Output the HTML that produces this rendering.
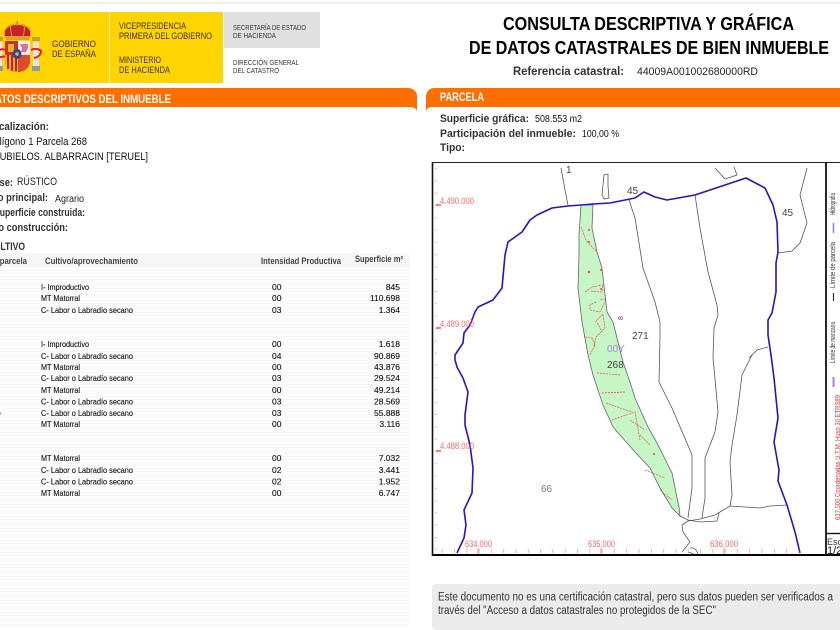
<!DOCTYPE html>
<html lang="es">
<head>
<meta charset="utf-8">
<title>Consulta descriptiva y gráfica</title>
<style>
html,body{margin:0;padding:0;width:840px;height:630px;overflow:hidden;background:#fff}
svg{display:block;position:absolute;left:0;top:0}
text{font-family:"Liberation Sans",sans-serif}
.b{font-weight:bold;fill:#333}
.r{font-size:8.5px;fill:#111;stroke:#111;stroke-width:.12}
.e{text-anchor:end}
.m{fill:#f66;font-size:9.5px}
.n{fill:#444;font-size:10px}
.lg{fill:#333;font-size:7.5px}
.blk{fill:none;stroke:#555;stroke-width:.8}
.red{fill:none;stroke:#e44;stroke-width:.7;stroke-dasharray:2 1}
</style>
</head>
<body>
<svg width="840" height="630" viewBox="0 0 840 630" xmlns="http://www.w3.org/2000/svg">
<defs>
<pattern id="st" width="4" height="3" patternUnits="userSpaceOnUse"><rect width="4" height="3" fill="#fcfcfc"/><rect width="4" height="1" fill="#f8f8f8"/></pattern>
</defs>
<rect x="0" y="2" width="840" height="2" fill="#eee"/>

<!-- Logo -->
<rect x="0" y="12" width="223" height="71" fill="#ffd400"/>
<rect x="109" y="12" width="1" height="71" fill="#f3e9a8"/>
<rect x="224" y="12" width="96" height="36" fill="#e0e0e0"/>
<!-- Coat of arms -->
<path d="M5 37C3 29 9 25 17.500 25C26 25 32 29 30 37Z" fill="#c8202a"/>
<path d="M5 36h25l-1 4H6Z" fill="#e0a020"/>
<rect x="16.500" y="21" width="1.500" height="5" fill="#b58a20"/>
<path d="M4 32C6 26 12 24 17.500 24C23 24 29 26 31 32M11 25C10 29 11 33 12 36M24 25C25 29 24 33 23 36" fill="none" stroke="#c9a030" stroke-width="1"/>
<path d="M5 41h25v20c0 6-6 11-12.500 11S5 67 5 61Z" fill="#d8352a"/>
<rect x="18" y="41" width="12" height="14" fill="#eee"/>
<path d="M20 44h8v4l-2 4h-5l1-4Z" fill="#d870a0"/>
<rect x="5" y="41" width="13" height="14" fill="#c8302a"/>
<rect x="8" y="44" width="6" height="8" fill="#e8b030"/>
<path d="M5 55h13v17C10 71 5 67 5 61Z" fill="#e8b030"/>
<path d="M8 55v14M12 55v16M16 55v16" stroke="#c8202a" stroke-width="2"/>
<path d="M18 55h12v6c0 6-5 11-12 11Z" fill="#dd4b2a"/>
<ellipse cx="17" cy="54" rx="4.500" ry="5" fill="#2a4a9a"/>
<circle cx="17" cy="54" r="1.800" fill="#e8b030"/>
<rect x="33" y="42" width="6" height="26" fill="#e6e6e6"/>
<rect x="32" y="37" width="8" height="4" fill="#c9a030"/>
<rect x="32" y="66" width="8" height="5" fill="#8a9aaa"/>
<rect x="0" y="42" width="2" height="26" fill="#e6e6e6"/>
<rect x="0" y="37" width="3" height="4" fill="#c9a030"/>
<rect x="0" y="66" width="3" height="5" fill="#8a9aaa"/>
<path d="M31 50c4-2 8-1 10 1c0 3-2 6-7 7" fill="none" stroke="#d8202a" stroke-width="2"/>
<path d="M5 50c-1-1-3-1-6 0M5 56c-1 1-3 1-6 1" fill="none" stroke="#d8202a" stroke-width="2"/>

<g font-size="9.500" fill="#3a3200">
<text x="52" y="47" textLength="44" lengthAdjust="spacingAndGlyphs">GOBIERNO</text>
<text x="52" y="57" textLength="44" lengthAdjust="spacingAndGlyphs">DE ESPAÑA</text>
<text x="119" y="29" textLength="67" lengthAdjust="spacingAndGlyphs">VICEPRESIDENCIA</text>
<text x="119" y="39" textLength="93" lengthAdjust="spacingAndGlyphs">PRIMERA DEL GOBIERNO</text>
<text x="119" y="63" textLength="42" lengthAdjust="spacingAndGlyphs">MINISTERIO</text>
<text x="119" y="73" textLength="51" lengthAdjust="spacingAndGlyphs">DE HACIENDA</text>
</g>
<g font-size="7.500" fill="#333">
<text x="233" y="30" textLength="73" lengthAdjust="spacingAndGlyphs">SECRETARÍA DE ESTADO</text>
<text x="233" y="38" textLength="43" lengthAdjust="spacingAndGlyphs">DE HACIENDA</text>
<text x="233" y="65" textLength="66" lengthAdjust="spacingAndGlyphs">DIRECCIÓN GENERAL</text>
<text x="233" y="73" textLength="46" lengthAdjust="spacingAndGlyphs">DEL CATASTRO</text>
</g>

<!-- Title -->
<g font-weight="bold" font-size="18.500px" fill="#000">
<text x="503" y="30" textLength="291" lengthAdjust="spacingAndGlyphs">CONSULTA DESCRIPTIVA Y GRÁFICA</text>
<text x="469" y="54" textLength="360" lengthAdjust="spacingAndGlyphs">DE DATOS CATASTRALES DE BIEN INMUEBLE</text>
</g>
<text class="b" x="513" y="75" font-size="11.500" textLength="111" lengthAdjust="spacingAndGlyphs">Referencia catastral:</text>
<text x="637" y="75" font-size="11" fill="#222" textLength="121" lengthAdjust="spacingAndGlyphs">44009A001002680000RD</text>

<!-- Orange bars -->
<path d="M-5 88H408C413 88 416 91 417 95V111C416 108 413 107 410 107H-5Z" fill="#ff6f00"/>
<path d="M426 111V95C427 91 430 88 434 88H840V107H432C429 107 427 108 426 111Z" fill="#ff6f00"/>
<text x="-12" y="103" font-size="12" font-weight="bold" fill="#fff" textLength="183" lengthAdjust="spacingAndGlyphs">DATOS DESCRIPTIVOS DEL INMUEBLE</text>
<text x="440" y="101" font-size="11.500" font-weight="bold" fill="#fff" textLength="44" lengthAdjust="spacingAndGlyphs">PARCELA</text>

<!-- Left details -->
<g font-size="11">
<text class="b" x="-13" y="130" textLength="62" lengthAdjust="spacingAndGlyphs">Localización:</text>
<text x="-12" y="145" fill="#111" textLength="99" lengthAdjust="spacingAndGlyphs">Polígono 1 Parcela 268</text>
<text x="-7" y="160" fill="#111" textLength="155" lengthAdjust="spacingAndGlyphs">CUBIELOS. ALBARRACIN [TERUEL]</text>
<text class="b" x="-15" y="186" textLength="28" lengthAdjust="spacingAndGlyphs">Clase:</text>
<text x="17" y="185" fill="#222" textLength="40" lengthAdjust="spacingAndGlyphs">RÚSTICO</text>
<text class="b" x="-14" y="201" textLength="62" lengthAdjust="spacingAndGlyphs">Uso principal:</text>
<text x="55" y="202" font-size="10" fill="#222" textLength="29" lengthAdjust="spacingAndGlyphs">Agrario</text>
<text class="b" x="-6" y="216" textLength="91" lengthAdjust="spacingAndGlyphs">Superficie construida:</text>
<text class="b" x="-14" y="231" textLength="82" lengthAdjust="spacingAndGlyphs">Año construcción:</text>
<text class="b" x="-12" y="250" textLength="37" lengthAdjust="spacingAndGlyphs">CULTIVO</text>
</g>

<!-- Table -->
<rect x="-10" y="253" width="420" height="374" rx="6" fill="url(#st)"/>
<path d="M-10 253H404a6 6 0 0 1 6 6V267H-10Z" fill="#f6f6f6"/>
<g font-size="9" class="b" style="fill:#444">
<text x="-15" y="264" textLength="42" lengthAdjust="spacingAndGlyphs">Subparcela</text>
<text x="45" y="264" textLength="93" lengthAdjust="spacingAndGlyphs">Cultivo/aprovechamiento</text>
<text x="261" y="264" textLength="80" lengthAdjust="spacingAndGlyphs">Intensidad Productiva</text>
<text x="355" y="262" textLength="48" lengthAdjust="spacingAndGlyphs">Superficie m²</text>
</g>
<g>
<text class="r" x="41" y="290" textLength="48" lengthAdjust="spacingAndGlyphs">I- Improductivo</text><text class="r" x="272" y="290">00</text><text class="r e" x="400" y="290">845</text>
<text class="r" x="41" y="301" textLength="39" lengthAdjust="spacingAndGlyphs">MT Matorral</text><text class="r" x="272" y="301">00</text><text class="r e" x="400" y="301">110.698</text>
<text class="r" x="41" y="313" textLength="92" lengthAdjust="spacingAndGlyphs">C- Labor o Labradío secano</text><text class="r" x="272" y="313">03</text><text class="r e" x="400" y="313">1.364</text>

<text class="r" x="41" y="347" textLength="48" lengthAdjust="spacingAndGlyphs">I- Improductivo</text><text class="r" x="272" y="347">00</text><text class="r e" x="400" y="347">1.618</text>
<text class="r" x="41" y="359" textLength="92" lengthAdjust="spacingAndGlyphs">C- Labor o Labradío secano</text><text class="r" x="272" y="359">04</text><text class="r e" x="400" y="359">90.869</text>
<text class="r" x="41" y="370" textLength="39" lengthAdjust="spacingAndGlyphs">MT Matorral</text><text class="r" x="272" y="370">00</text><text class="r e" x="400" y="370">43.876</text>
<text class="r" x="41" y="381" textLength="92" lengthAdjust="spacingAndGlyphs">C- Labor o Labradío secano</text><text class="r" x="272" y="381">03</text><text class="r e" x="400" y="381">29.524</text>
<text class="r" x="41" y="393" textLength="39" lengthAdjust="spacingAndGlyphs">MT Matorral</text><text class="r" x="272" y="393">00</text><text class="r e" x="400" y="393">49.214</text>
<text class="r" x="41" y="404.500" textLength="92" lengthAdjust="spacingAndGlyphs">C- Labor o Labradío secano</text><text class="r" x="272" y="404.500">03</text><text class="r e" x="400" y="404.500">28.569</text>
<text class="r" x="41" y="416" textLength="92" lengthAdjust="spacingAndGlyphs">C- Labor o Labradío secano</text><text class="r" x="272" y="416">03</text><text class="r e" x="400" y="416">55.888</text>
<text class="r" x="41" y="427" textLength="39" lengthAdjust="spacingAndGlyphs">MT Matorral</text><text class="r" x="272" y="427">00</text><text class="r e" x="400" y="427">3.116</text>

<text class="r" x="41" y="461" textLength="39" lengthAdjust="spacingAndGlyphs">MT Matorral</text><text class="r" x="272" y="461">00</text><text class="r e" x="400" y="461">7.032</text>
<text class="r" x="41" y="473" textLength="92" lengthAdjust="spacingAndGlyphs">C- Labor o Labradío secano</text><text class="r" x="272" y="473">02</text><text class="r e" x="400" y="473">3.441</text>
<text class="r" x="41" y="484.500" textLength="92" lengthAdjust="spacingAndGlyphs">C- Labor o Labradío secano</text><text class="r" x="272" y="484.500">02</text><text class="r e" x="400" y="484.500">1.952</text>
<text class="r" x="41" y="496" textLength="39" lengthAdjust="spacingAndGlyphs">MT Matorral</text><text class="r" x="272" y="496">00</text><text class="r e" x="400" y="496">6.747</text>
</g>
<rect x="0" y="412" width="1" height="3" fill="#7cc8e8"/>

<!-- Right details -->
<g font-size="11">
<text class="b" x="440" y="122" textLength="89" lengthAdjust="spacingAndGlyphs">Superficie gráfica:</text>
<text x="535" y="122" font-size="10" fill="#111" textLength="47" lengthAdjust="spacingAndGlyphs">508.553 m2</text>
<text class="b" x="440" y="137" textLength="136" lengthAdjust="spacingAndGlyphs">Participación del inmueble:</text>
<text x="582" y="137" font-size="10" fill="#111" textLength="37" lengthAdjust="spacingAndGlyphs">100,00 %</text>
<text class="b" x="440" y="151" textLength="25" lengthAdjust="spacingAndGlyphs">Tipo:</text>
</g>

<!-- Map -->
<path d="M581 205L579 235L579 255L578 288L582 322L588 355L593 375L603 405L613 427L635 452L650 468L660 488L672 508L680 516L679 507L675 488L672 473L657 443L648 427L635 398L630 382L623 362L613 322L607 312L602 268L597 252L592 228L593 205Z" fill="#c6f5c6" stroke="#666" stroke-width=".8"/>

<g class="red">
<path class="red" d="M581 227L586 240L592 247L597 252"/>
<path class="red" d="M585 292L592 287L603 285L602 292L590 291"/>
<path class="red" d="M596 302L590 305L590 310L600 312L606 300L600 299"/>
<path class="red" d="M601 330L596 321L603 314L605 328L596 337L594 347"/>
<path class="red" d="M585 337L592 338L595 345L590 355"/>
<path class="red" d="M597 373L620 375M602 393L625 392M606 403L632 412M612 420L635 412L640 440"/>
<path class="red" d="M630 420L645 430M640 435L650 445M645 470L665 478M660 490L672 500"/>
</g>
<g fill="#e44">
<circle cx="589" cy="230" r="1"/><circle cx="589" cy="242" r="1"/><circle cx="589" cy="272" r="1.200"/><circle cx="601" cy="270" r="1"/><circle cx="601" cy="289" r="1"/><circle cx="654" cy="454" r="1"/>
</g>

<g class="blk">
<path d="M561 168L565 190L568 205"/>
<path d="M629 200L635 218L643 268L655 302L660 322L660 338L659 382L672 408L692 455L692 488L688 518"/>
<path d="M695 195L700 228L708 272L717 305L718 315L714 328L713 358L714 368L718 412L715 432L705 458L705 498L702 518"/>
<path d="M749 358L757 350L768 347"/>
<path d="M752 355L742 375L737 415L732 445L730 462L732 495L730 506L745 507L760 508L770 506L787 505"/>
<path d="M730 506L715 515L700 519L688 521L682 525L683 532L690 542L682 552"/>
<path d="M680 516L688 520L700 522L717 521L719 513"/>
<path d="M715 168L725 179L737 175L734 167"/>
<path d="M604 175L608 174L608 186L609 198L604 199L602 195L603 185Z"/>
<path d="M807 168L800 195L807 223L800 243L792 251L778 253"/>
<path d="M688 552L694 554M690 548C695 547 698 552 698 555"/>
</g>

<path fill="none" stroke="#3010c0" stroke-width="1.600" stroke-linejoin="round" d="M457 553L464 538L466 525L464 510L472 493L473 468L470 445L465 425L465 415L468 392L463 378L457 367L455 360L455 355L463 343L464 333L470 325L475 312L478 307L493 300L502 288L505 255L508 242L522 232L530 220L537 215L552 208L568 206L581 205L593 204L610 203L635 198L644 192L655 197L667 200L695 195L728 184L746 178L765 188L773 205L777 222L778 252L776 263L776 292L772 313L768 320L768 335L771 355L774 378L778 418L774 442L779 470L778 481L787 505L795 532L800 553"/>

<!-- map ticks -->
<path stroke="#f55" stroke-width="1" fill="none" stroke-dasharray="1 11.300" d="M436 168V550"/>
<path stroke="#f00" stroke-width="1" d="M436 205H441M436 328H441M436 451H441"/>
<path stroke="#f55" stroke-width="1" fill="none" stroke-dasharray="1 11.300" d="M441.700 552H810"/>
<path stroke="#f55" stroke-width="1" fill="none" stroke-dasharray="1 11.300" d="M441.700 550H810"/>
<path stroke="#f88" stroke-width="1" d="M478 548V554M601 548V554M724 548V554"/>
<text class="m" x="440" y="204" textLength="34" lengthAdjust="spacingAndGlyphs">4.490.000</text>
<text class="m" x="440" y="327" textLength="34" lengthAdjust="spacingAndGlyphs">4.489.000</text>
<text class="m" x="440" y="449" textLength="34" lengthAdjust="spacingAndGlyphs">4.488.000</text>
<text class="m" x="465" y="547" textLength="27" lengthAdjust="spacingAndGlyphs">634.000</text>
<text class="m" x="588" y="547" textLength="27" lengthAdjust="spacingAndGlyphs">635.000</text>
<text class="m" x="710" y="547" textLength="28" lengthAdjust="spacingAndGlyphs">636.000</text>

<!-- map labels -->
<text class="n" x="627" y="194">45</text>
<text class="n" x="782" y="216">45</text>
<text class="n" x="632" y="339">271</text>
<text class="n" x="607" y="368" fill="#333">268</text>
<text class="n" x="541" y="492" style="fill:#777">66</text>
<text class="n" x="566" y="173" font-size="8">1</text>
<text x="607" y="352" font-size="10" fill="#b080e8">00Y</text>
<text x="0" y="0" font-size="7" fill="#444" transform="translate(623 320) rotate(-90)">8</text>

<!-- Map border & legend -->
<rect x="826" y="163" width="14" height="391" fill="#fff"/>
<path d="M432 162.500H840" stroke="#222" stroke-width="1"/>
<path d="M432.500 162V556" stroke="#111" stroke-width="1.600"/>
<path d="M432 555H840" stroke="#000" stroke-width="2"/>
<path d="M826 162V555" stroke="#111" stroke-width="1.800"/>
<path d="M826 533.500H840" stroke="#111" stroke-width="1.400"/>
<text class="lg" transform="translate(835 215) rotate(-90)" textLength="22" lengthAdjust="spacingAndGlyphs">Hidrografía</text>
<path d="M833.500 223V233" stroke="#8080e0" stroke-width="1.500"/>
<text class="lg" transform="translate(835 288) rotate(-90)" textLength="46" lengthAdjust="spacingAndGlyphs">Límite de parcela</text>
<path d="M833.500 293V301" stroke="#333" stroke-width="1.200"/>
<text class="lg" transform="translate(835 363) rotate(-90)" textLength="41" lengthAdjust="spacingAndGlyphs">Límite de manzana</text>
<path d="M833.500 377V387" stroke="#b080e8" stroke-width="2"/>
<text font-size="7.500" fill="#e33" transform="translate(840 520) rotate(-90)" textLength="125" lengthAdjust="spacingAndGlyphs">637.000 Coordenadas U.T.M. Huso 30 ETRS89</text>
<text x="827" y="545" font-size="9" fill="#333">Escala</text>
<text x="827" y="554" font-size="11" fill="#111">1/2000</text>
<rect x="840" y="0" width="10" height="630" fill="#fff"/>

<!-- Footer note -->
<rect x="432" y="584" width="420" height="46" rx="4" fill="#ebebeb"/>
<text x="438" y="600.500" font-size="11.500" fill="#333" textLength="395" lengthAdjust="spacingAndGlyphs">Este documento no es una certificación catastral, pero sus datos pueden ser verificados a</text>
<text x="438" y="614" font-size="11.500" fill="#333" textLength="278" lengthAdjust="spacingAndGlyphs">través del "Acceso a datos catastrales no protegidos de la SEC"</text>
</svg>
</body>
</html>
